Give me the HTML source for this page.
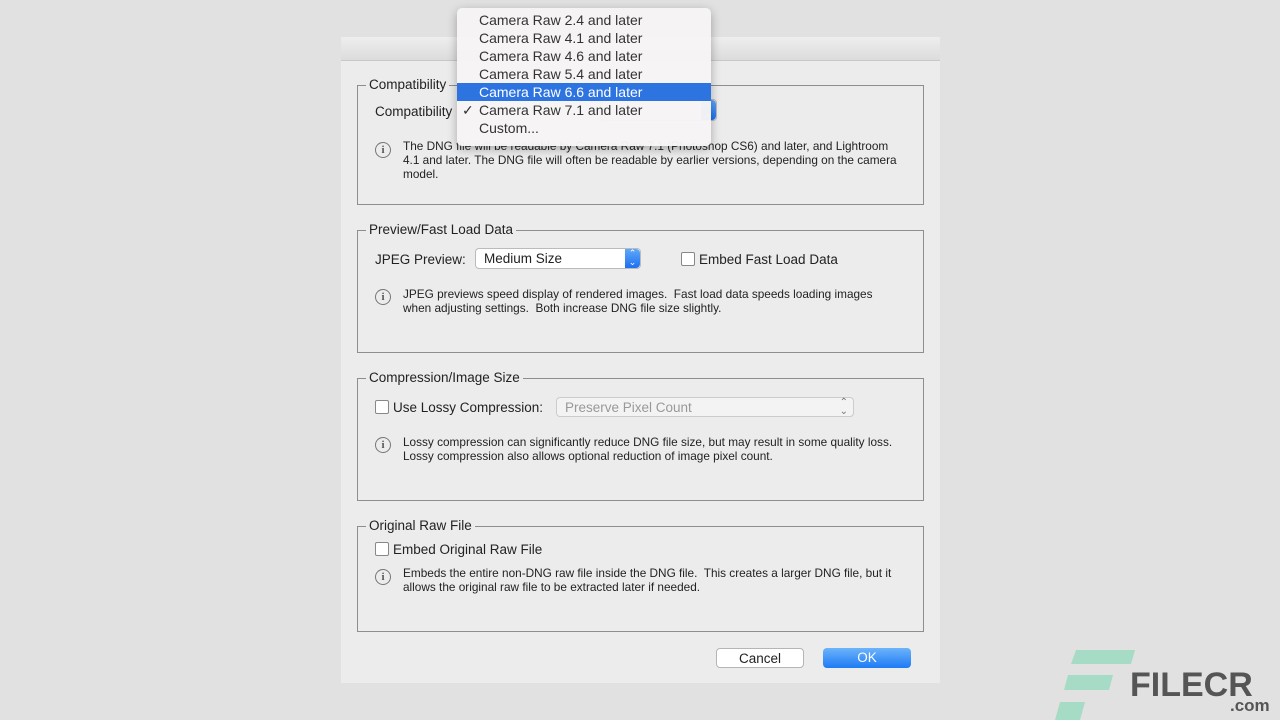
<!DOCTYPE html>
<html><head><style>
body{margin:0;width:1280px;height:720px;background:#e1e1e1;position:relative;overflow:hidden;font-family:"Liberation Sans",sans-serif;color:#222}
.abs{position:absolute}
.dlg{left:341px;top:37px;width:599px;height:646px;background:#ececec}
.tb{left:341px;top:37px;width:599px;height:23px;background:linear-gradient(#eeeeee,#dcdcdc);border-bottom:1px solid #c8c8c8;border-radius:4px 4px 0 0}
.grp{border:1px solid #8e8e8e;left:357px;width:565px}
.lg{font-size:13.5px;background:#ececec;padding:0 3px;left:366px}
.t13{font-size:13.5px}
.small{font-size:11.8px;line-height:14px;color:#222;white-space:nowrap}
.info{width:14px;height:14px;border:1px solid #777;border-radius:50%;font:bold 11px "Liberation Serif",serif;text-align:center;line-height:14px;color:#555}
.cb{width:12px;height:12px;border:1px solid #888;border-radius:2px;background:#fff}
.pop{background:#fff;border:1px solid #bbb;border-radius:4px;font-size:13.5px;padding-left:8px;box-sizing:border-box}
.arrow{right:0;top:0;width:15px;height:100%;background:linear-gradient(#5ea8f8,#1d6ff0);border-radius:0 4px 4px 0;color:#fff;font-size:9px;text-align:center;line-height:9px}
.menu{left:457px;top:8px;width:254px;height:138px;background:rgba(246,244,244,.97);border-radius:5px;box-shadow:0 3px 10px rgba(0,0,0,.3);font-size:14px}
.mi{position:absolute;left:0;width:254px;height:18px;line-height:18px;padding-left:22px;box-sizing:border-box;color:#333}
.btn{height:20px;border-radius:4px;font-size:13.5px;text-align:center;line-height:20px}
</style></head><body>
<div class="abs dlg"></div>
<div class="abs tb"></div>

<div class="abs grp" style="top:85px;height:118px"></div>
<div class="abs lg" style="top:77px">Compatibility</div>
<div class="abs t13" style="left:375px;top:104px">Compatibility</div>
<div class="abs pop" style="left:600px;top:99px;width:117px;height:22px"><div class="abs arrow">⌃<br>⌄</div></div>
<div class="abs info" style="left:375px;top:142px">i</div>
<div class="abs small" style="left:403px;top:139px">The DNG file will be readable by Camera Raw 7.1 (Photoshop CS6) and later, and Lightroom<br>4.1 and later. The DNG file will often be readable by earlier versions, depending on the camera<br>model.</div>

<div class="abs grp" style="top:230px;height:121px"></div>
<div class="abs lg" style="top:222px">Preview/Fast Load Data</div>
<div class="abs t13" style="left:375px;top:252px">JPEG Preview:</div>
<div class="abs pop" style="left:475px;top:248px;width:166px;height:21px;line-height:20px">Medium Size<div class="abs arrow">⌃<br>⌄</div></div>
<div class="abs cb" style="left:681px;top:252px"></div>
<div class="abs t13" style="left:699px;top:252px">Embed Fast Load Data</div>
<div class="abs info" style="left:375px;top:289px">i</div>
<div class="abs small" style="left:403px;top:287px">JPEG previews speed display of rendered images.&nbsp; Fast load data speeds loading images<br>when adjusting settings.&nbsp; Both increase DNG file size slightly.</div>

<div class="abs grp" style="top:378px;height:121px"></div>
<div class="abs lg" style="top:370px">Compression/Image Size</div>
<div class="abs cb" style="left:375px;top:400px"></div>
<div class="abs t13" style="left:393px;top:400px">Use Lossy Compression:</div>
<div class="abs pop" style="left:556px;top:397px;width:298px;height:20px;line-height:19px;color:#999;background:#f3f3f3;border-color:#ccc">Preserve Pixel Count<span class="abs" style="right:5px;top:0;font-size:10px;line-height:9px;color:#777">⌃<br>⌄</span></div>
<div class="abs info" style="left:375px;top:437px">i</div>
<div class="abs small" style="left:403px;top:435px">Lossy compression can significantly reduce DNG file size, but may result in some quality loss.<br>Lossy compression also allows optional reduction of image pixel count.</div>

<div class="abs grp" style="top:526px;height:104px"></div>
<div class="abs lg" style="top:518px">Original Raw File</div>
<div class="abs cb" style="left:375px;top:542px"></div>
<div class="abs t13" style="left:393px;top:542px">Embed Original Raw File</div>
<div class="abs info" style="left:375px;top:569px">i</div>
<div class="abs small" style="left:403px;top:566px">Embeds the entire non-DNG raw file inside the DNG file.&nbsp; This creates a larger DNG file, but it<br>allows the original raw file to be extracted later if needed.</div>

<div class="abs btn" style="left:716px;top:648px;width:88px;background:#fff;border:1px solid #b5b5b5;box-sizing:border-box">Cancel</div>
<div class="abs btn" style="left:823px;top:648px;width:88px;background:linear-gradient(#6cb3fa,#1e7bf5);color:#fff">OK</div>

<div class="abs menu">
<div class="mi" style="top:3px">Camera Raw 2.4 and later</div>
<div class="mi" style="top:21px">Camera Raw 4.1 and later</div>
<div class="mi" style="top:39px">Camera Raw 4.6 and later</div>
<div class="mi" style="top:57px">Camera Raw 5.4 and later</div>
<div class="mi" style="top:75px;background:#2d74e0;color:#fff">Camera Raw 6.6 and later</div>
<div class="mi" style="top:93px"><span class="abs" style="left:5px">✓</span>Camera Raw 7.1 and later</div>
<div class="mi" style="top:111px">Custom...</div>
</div>

<svg class="abs" style="left:1055px;top:648px" width="90" height="72">
<polygon points="21,2 80,2 76,16 16,16" fill="#a6dcc6"/>
<polygon points="13,27 58,27 54,42 9,42" fill="#a6dcc6"/>
<polygon points="5,54 30,54 25,72 0,72" fill="#a6dcc6"/>
</svg>
<div class="abs" style="left:1130px;top:666px;font:bold 34px 'Liberation Sans',sans-serif;color:#555">FILECR</div>
<div class="abs" style="left:1230px;top:696px;font:bold 17px 'Liberation Sans',sans-serif;color:#555">.com</div>
</body></html>
